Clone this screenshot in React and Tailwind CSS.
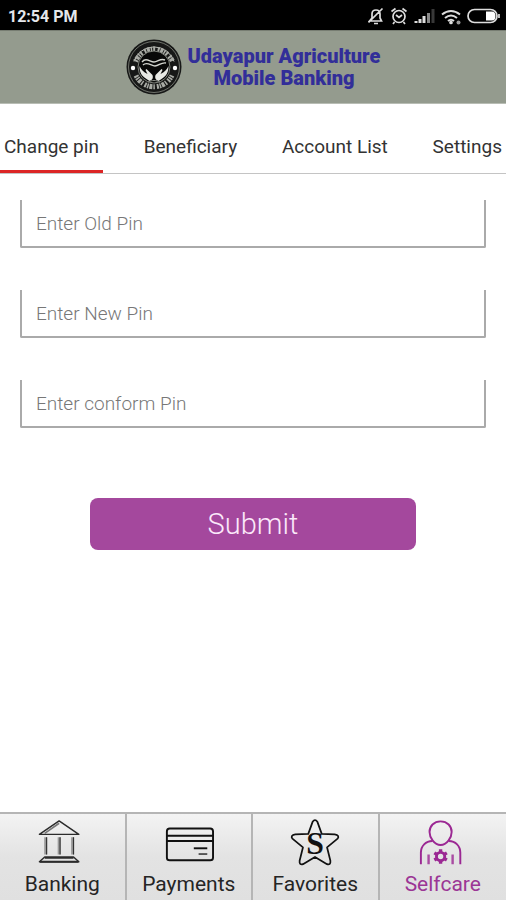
import { useState } from 'react'

const tabs = ['Change pin', 'Beneficiary', 'Account List', 'Settings']

const fields = [
  { id: 'oldPin', label: 'Enter Old Pin' },
  { id: 'newPin', label: 'Enter New Pin' },
  { id: 'confirmPin', label: 'Enter conform Pin' }
]

const navItems = [
  { label: 'Banking', icon: BankIcon },
  { label: 'Payments', icon: CardIcon },
  { label: 'Favorites', icon: StarIcon },
  { label: 'Selfcare', icon: SelfcareIcon }
]

function BankIcon() {
  return (
    <svg viewBox="0 0 52 52" className="h-13 w-13" fill="none" stroke="#2b2b2b" strokeWidth="1.5" strokeLinejoin="round">
      <path d="M23 3 43.500 17H2.500Z" />
      <path d="M23 5.500 8 16" stroke="#777" strokeWidth="1.800" />
      <path d="M9 20v18M23 20v18M37 20v18" stroke="#999" strokeWidth="3" />
      <path d="M10 20v18M24 20v18M38 20v18" stroke="#333" strokeWidth="1.200" />
      <path d="M8 40.500h30l5.500 5h-41Z" />
      <path d="M8 41.500h30M3 45.500h40" strokeWidth="2" />
    </svg>
  )
}

function CardIcon() {
  return (
    <svg viewBox="0 0 52 52" className="h-13 w-13" fill="none" stroke="#111" strokeWidth="2">
      <rect x="3" y="11" width="48" height="33" rx="3" />
      <path d="M3 18.500h48M3 24h48" />
      <path d="M31 31.500h14" />
      <path d="M36 37.500h9" stroke="#555" />
    </svg>
  )
}

function StarIcon() {
  return (
    <svg viewBox="0 0 52 52" className="h-13 w-13" fill="none" stroke="#111" strokeWidth="1.800" strokeLinejoin="round">
      <path d="M23.500 4Q26 0.500 28.500 4L33 16.500L46.500 17Q52 18 49.500 21.500L38.500 30.500L42 44.500Q42.500 49 38.500 48L26 40.500L13.500 48Q9.500 49 10 44.500L13.500 30.500L2.500 21.500Q0 18 5.500 17L19 16.500Z" />
      <text x="26" y="37" textAnchor="middle" fontFamily="Liberation Serif, serif" fontWeight="700" fontSize="33" fill="#111" stroke="none">S</text>
    </svg>
  )
}

function SelfcareIcon() {
  return (
    <svg viewBox="0 0 52 52" className="h-13 w-13" fill="none" stroke="#9b2893" strokeWidth="2">
      <path d="M23.500 3.500c7 0 11.500 5 11.500 11S30 28 23.500 28 12 20.500 12 14.500s4.500-11 11.500-11Z" />
      <path d="M3 48V36c0-7 5-12 12-12M44 48V36c0-7-5-12-12-12" />
      <path d="M11 38v10M36 38v10" strokeWidth="2.500" stroke="#a94ba2" />
      <circle cx="23.500" cy="40" r="4.300" strokeWidth="3" />
      <path d="M23.500 32.500v4M23.500 43.500v4M17 36.300l3.400 2M26.600 41.700l3.400 2M17 43.700l3.400-2M26.600 38.300l3.400-2" strokeWidth="3.500" />
    </svg>
  )
}

function Logo() {
  return (
    <svg viewBox="0 0 56 56" className="h-14 w-14 shrink-0" fill="none">
      <circle cx="28" cy="28" r="27.500" fill="#171817" />
      <circle cx="28" cy="28" r="25.500" stroke="#858980" strokeWidth="0.800" />
      <path d="M8 22.500a21 21 0 0 1 40 0" stroke="#b9bbb5" strokeWidth="1" />
      <path d="M9.500 22.500a20 20 0 0 1 37 0" stroke="#a9aba5" strokeWidth="5" strokeDasharray="2 .8 3 .8 1.500 1 2 2.500" />
      <path d="M10 36.500a20 20 0 0 0 36 0" stroke="#a9aba5" strokeWidth="5" strokeDasharray="2 .8 1.500 .8 3 1 1.500 2" />
      <circle cx="28" cy="28" r="16" fill="#080808" stroke="#8b8e87" strokeWidth="0.900" />
      <circle cx="7" cy="29" r="2.200" fill="#fff" />
      <circle cx="49" cy="29" r="2.200" fill="#fff" />
      <path d="M13.500 27c0 6 2 10 7 13l3 2c3-1 4-3 3-6l-6-6-1 1 2 4c-4-2-6-4-8-8Z" fill="#e8e9e5" />
      <path d="M42.500 27c0 6-2 10-7 13l-3 2c-3-1-4-3-3-6l6-6 1 1-2 4c4-2 6-4 8-8Z" fill="#e8e9e5" />
      <path d="M16 23c4-5 8 0 12 0s6-4 11-2M17 26c4-4 8 1 12 1s6-4 11-3" stroke="#d3d5cf" strokeWidth="1.400" />
      <path d="M22 43c4-2 8-2 12 0" stroke="#8b8e87" />
    </svg>
  )
}

function StatusIcons() {
  return (
    <svg viewBox="0 0 134 20" className="h-5 w-[134px]" fill="none" stroke="#ddd" strokeWidth="1.700">
      {/* muted bell */}
      <path d="M1.500 14h12l-1.500-3V7q0-4-4-4T4 7v4ZM.5 15.500 14.500 1.500M6 16.500h4" />
      {/* alarm */}
      <circle cx="31" cy="9.500" r="6" />
      <path d="m23.500 4.500 4-3M38.500 4.500l-4-3M28 8l3 2.500L34 8M26.500 15l-1.500 2M35.500 15l1.500 2" />
      {/* signal */}
      <path d="M48 16v-2M52 16v-4M56 16V9" strokeWidth="3" />
      <path d="M60.500 16V6" stroke="#888" strokeWidth="3" />
      <path d="M65 16V2" stroke="#383838" strokeWidth="3" />
      {/* wifi */}
      <path d="M74 7.500q9-7 18 0M77 11q6-5 12 0M80 14q3-2.500 6 0" strokeWidth="2" />
      <circle cx="83" cy="15.500" r="1" fill="#ddd" />
      <circle cx="90.500" cy="15.500" r="2" fill="#999" stroke="none" />
      {/* battery */}
      <rect x="100" y="2.500" width="29" height="13" rx="6.500" />
      <path d="M118 4.500h6q3.500 0 3.500 4.500t-3.500 4.500h-6Z" fill="#fff" stroke="none" />
      <path d="M131 7v4" />
    </svg>
  )
}

export default function App() {
  const [activeTab, setActiveTab] = useState('Change pin')
  const [activeNav, setActiveNav] = useState('Selfcare')

  return (
    <div className="flex min-h-screen flex-col overflow-x-hidden bg-white font-[Roboto,sans-serif]">
      <div className="flex h-[30px] items-center justify-between bg-black pt-1 pr-1 pl-2">
        <span className="text-base font-bold text-gray-200">12:54 PM</span>
        <StatusIcons />
      </div>

      <header className="flex h-[74px] items-center justify-center gap-1.5 border-t border-b border-t-[#777d72] border-b-[#b8bdb4] bg-[#949b8e]">
        <Logo />
        <h1 className="text-center text-xl leading-[22px] font-black text-[#322e99]">
          Udayapur Agriculture
          <br />
          Mobile Banking
        </h1>
      </header>

      <div className="flex h-[70px] justify-between border-b border-[#c4c4c4] pt-5 whitespace-nowrap">
        {tabs.map((tab) => (
          <button
            key={tab}
            type="button"
            onClick={() => setActiveTab(tab)}
            className={`shrink-0 border-b-3 px-1 text-[19px] text-[#333] ${
              activeTab === tab ? 'border-[#dc2525]' : 'border-transparent'
            }`}
          >
            {tab}
          </button>
        ))}
      </div>

      <main className="flex-1 px-5 pt-[26px]">
        <form onSubmit={(e) => e.preventDefault()} className="flex flex-col gap-[42px]">
          {fields.map((field) => (
            <input
              key={field.id}
              id={field.id}
              type="password"
              aria-label={field.label}
              placeholder={field.label}
              className="h-12 w-full rounded-b-xs border-x-2 border-b-2 border-[#aaa] px-3.5 text-[19px] font-light text-[#333] outline-none placeholder:text-[#777]"
            />
          ))}
          <button
            type="submit"
            className="mt-7 h-[52px] w-[70%] self-center rounded-lg bg-[#a4489d] text-[29px] leading-[48px] font-light text-[#fbe9fa]"
          >
            Submit
          </button>
        </form>
      </main>

      <nav className="grid grid-cols-4 divide-x-2 divide-[#b5b5b5] border-t-2 border-[#b5b5b5] bg-linear-to-b from-[#f3f3f3] via-[#e3e3e3] to-[#e0e0e0]">
        {navItems.map(({ label, icon: Icon }) => (
          <button
            key={label}
            type="button"
            onClick={() => setActiveNav(label)}
            className={`flex h-[86px] flex-col items-center pt-1 text-[21px] leading-8 ${
              activeNav === label ? 'text-[#9b3695]' : 'text-[#252525]'
            }`}
          >
            <Icon />
            {label}
          </button>
        ))}
      </nav>
    </div>
  )
}
